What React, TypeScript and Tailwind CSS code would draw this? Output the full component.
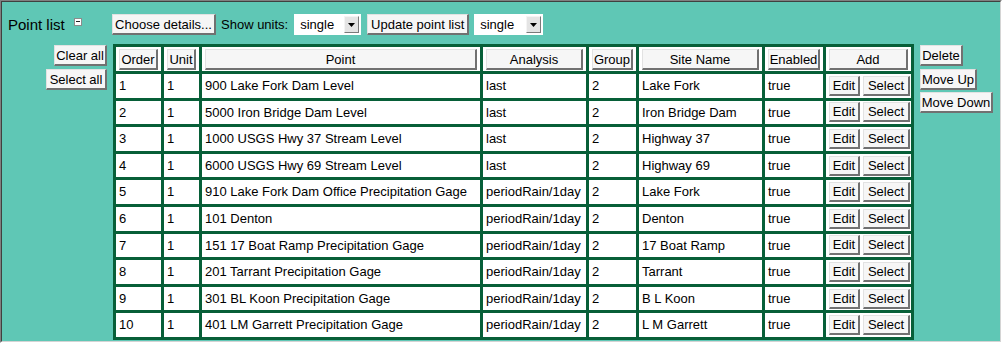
import type { ReactNode } from 'react';

type Row = {
  order: number;
  unit: number;
  point: string;
  analysis: string;
  group: number;
  site: string;
  enabled: string;
};

const rows: Row[] = [
  { order: 1, unit: 1, point: '900 Lake Fork Dam Level', analysis: 'last', group: 2, site: 'Lake Fork', enabled: 'true' },
  { order: 2, unit: 1, point: '5000 Iron Bridge Dam Level', analysis: 'last', group: 2, site: 'Iron Bridge Dam', enabled: 'true' },
  { order: 3, unit: 1, point: '1000 USGS Hwy 37 Stream Level', analysis: 'last', group: 2, site: 'Highway 37', enabled: 'true' },
  { order: 4, unit: 1, point: '6000 USGS Hwy 69 Stream Level', analysis: 'last', group: 2, site: 'Highway 69', enabled: 'true' },
  { order: 5, unit: 1, point: '910 Lake Fork Dam Office Precipitation Gage', analysis: 'periodRain/1day', group: 2, site: 'Lake Fork', enabled: 'true' },
  { order: 6, unit: 1, point: '101 Denton', analysis: 'periodRain/1day', group: 2, site: 'Denton', enabled: 'true' },
  { order: 7, unit: 1, point: '151 17 Boat Ramp Precipitation Gage', analysis: 'periodRain/1day', group: 2, site: '17 Boat Ramp', enabled: 'true' },
  { order: 8, unit: 1, point: '201 Tarrant Precipitation Gage', analysis: 'periodRain/1day', group: 2, site: 'Tarrant', enabled: 'true' },
  { order: 9, unit: 1, point: '301 BL Koon Precipitation Gage', analysis: 'periodRain/1day', group: 2, site: 'B L Koon', enabled: 'true' },
  { order: 10, unit: 1, point: '401 LM Garrett Precipitation Gage', analysis: 'periodRain/1day', group: 2, site: 'L M Garrett', enabled: 'true' },
];

// old-school windows style push button
function Btn({ children, className = '' }: { children: ReactNode; className?: string }) {
  return (
    <button
      className={`flex items-center justify-center whitespace-nowrap bg-[#f6f6f6] text-[13px] leading-none text-black border-t border-l border-r-2 border-b-2 border-t-[#e2e2e2] border-l-[#e2e2e2] border-r-[#717171] border-b-[#717171] ${className}`}
    >
      {children}
    </button>
  );
}

function FakeSelect({ value, className = '' }: { value: string; className?: string }) {
  return (
    <div className={`flex h-[21px] items-center justify-between bg-white pl-[6px] pr-[2px] text-[13px] ${className}`}>
      <span>{value}</span>
      <span className="flex h-[17px] w-[15px] items-center justify-center bg-[#e4e4e4] border-t border-l border-r border-b border-t-[#f4f4f4] border-l-[#f4f4f4] border-r-[#7a7a7a] border-b-[#7a7a7a]">
        <svg width="7" height="4" viewBox="0 0 7 4">
          <path d="M0 0h7L3.5 4z" fill="#000" />
        </svg>
      </span>
    </div>
  );
}

const headers = [
  { label: 'Order', w: 'w-[45px]' },
  { label: 'Unit', w: 'w-[35px]' },
  { label: 'Point', w: 'w-[278px]' },
  { label: 'Analysis', w: 'w-[103px]' },
  { label: 'Group', w: 'w-[47px]' },
  { label: 'Site Name', w: 'w-[123px]' },
  { label: 'Enabled', w: 'w-[58px]' },
  { label: 'Add', w: 'w-[85px]' },
];

export default function App() {
  return (
    <div className="h-[343px] w-[1002px] overflow-hidden border-t border-l border-b border-r border-t-[#808080] border-l-[#808080] border-b-white border-r-white font-['Liberation_Sans',Arial,sans-serif] text-black">
      <div className="h-full w-full overflow-hidden border-t border-l border-b border-r border-t-[#404040] border-l-[#404040] border-b-[#d4d4d4] border-r-[#d4d4d4] bg-[#5fc7b5] pl-[6px] pt-[12px]">
        {/* top controls */}
        <div className="flex h-[21px] items-center">
          <div className="flex w-[104px] items-center self-stretch">
            <span className="text-[15px] leading-none">Point list</span>
            <span className="relative ml-[9px] -mt-[6px] inline-block h-[8px] w-[8px] border border-[#8c8c8c] bg-white">
              <span className="absolute left-[1px] top-[2px] h-[1px] w-[4px] bg-[#222]" />
            </span>
          </div>
          <Btn className="h-[21px] w-[104px]">Choose details...</Btn>
          <span className="ml-[5px] text-[13px]">Show units:</span>
          <FakeSelect value="single" className="ml-[6px] w-[67px]" />
          <Btn className="ml-[6px] h-[21px] w-[102px]">Update point list</Btn>
          <FakeSelect value="single" className="ml-[5px] w-[69px]" />
        </div>

        {/* main area */}
        <div className="mt-[9px] flex items-start">
          <div className="mt-[1px] flex w-[99px] flex-col items-end gap-[3px]">
            <Btn className="h-[21px] w-[53px]">Clear all</Btn>
            <Btn className="h-[21px] w-[61px]">Select all</Btn>
          </div>

          <table className="ml-[6px] w-[801px] table-fixed border-separate border-spacing-[3px] bg-[#075f38] text-[13px]">
            <colgroup>
              {headers.map((h) => (
                <col key={h.label} className={h.w} />
              ))}
            </colgroup>
            <thead>
              <tr>
                {headers.map((h) => (
                  <th key={h.label} className="h-[24px] bg-white px-[3px] pt-[2px] pb-[1px] align-top font-normal">
                    <Btn className="h-[21px] w-full">{h.label}</Btn>
                  </th>
                ))}
              </tr>
            </thead>
            <tbody>
              {rows.map((r) => (
                <tr key={r.order}>
                  <td className="h-[23.6px] bg-white px-[3px] py-0 whitespace-nowrap">{r.order}</td>
                  <td className="bg-white px-[3px] py-0 whitespace-nowrap">{r.unit}</td>
                  <td className="bg-white px-[3px] py-0 whitespace-nowrap">{r.point}</td>
                  <td className="bg-white px-[3px] py-0 whitespace-nowrap">{r.analysis}</td>
                  <td className="bg-white px-[3px] py-0 whitespace-nowrap">{r.group}</td>
                  <td className="bg-white px-[3px] py-0 whitespace-nowrap">{r.site}</td>
                  <td className="bg-white px-[3px] py-0 whitespace-nowrap">{r.enabled}</td>
                  <td className="bg-white py-0 pl-[3px] pr-[1px]">
                    <div className="flex gap-[3px]">
                      <Btn className="h-[20px] w-[31px]">Edit</Btn>
                      <Btn className="h-[20px] w-[47px]">Select</Btn>
                    </div>
                  </td>
                </tr>
              ))}
            </tbody>
          </table>

          <div className="ml-[6px] mt-[1px] flex flex-col items-start gap-[2px]">
            <Btn className="h-[21px] w-[43px]">Delete</Btn>
            <Btn className="mt-[1px] h-[21px] w-[57px]">Move Up</Btn>
            <Btn className="h-[21px] w-[73px]">Move Down</Btn>
          </div>
        </div>
      </div>
    </div>
  );
}
